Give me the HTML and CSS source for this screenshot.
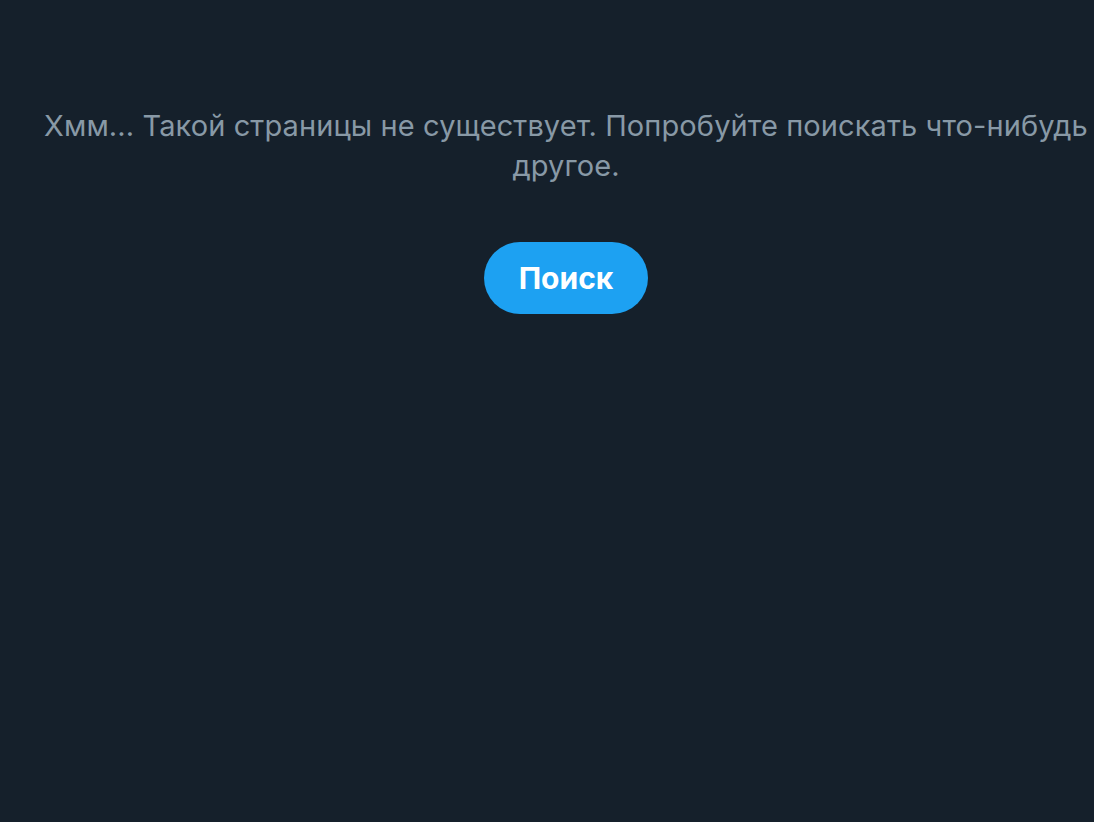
FILE: index.html
```html
<!DOCTYPE html>
<html lang="ru">
<head>
<meta charset="utf-8">
<link rel="stylesheet" href="styles.css">
<title>Страница не найдена</title>
</head>
<body>
<main class="page">
  <div class="empty">
    <p class="message">Хмм... Такой страницы не существует. Попробуйте поискать что-нибудь другое.</p>
    <button class="search-btn" type="button">Поиск</button>
  </div>
</main>
</body>
</html>
```

FILE: styles.css
```css
html, body {
  margin: 0;
  padding: 0;
  background: #15202b;
  height: 100%;
  overflow: hidden;
}
.page {
  box-sizing: border-box;
  height: 100%;
  padding-left: 38px;
  font-family: Inter, "Liberation Sans", Arial, sans-serif;
}
.empty {
  display: flex;
  flex-direction: column;
  align-items: center;
  padding-top: 106px;
}
.message {
  margin: 0;
  color: #8899a6;
  font-size: 29px;
  letter-spacing: 0.1px;
  line-height: 40px;
  text-align: center;
}
.search-btn {
  margin-top: 56px;
  height: 72px;
  padding: 0 35px;
  border: none;
  border-radius: 36px;
  background: #1da1f2;
  color: #fff;
  font-family: Inter, "Liberation Sans", Arial, sans-serif;
  font-weight: bold;
  font-size: 30px;
}
```
